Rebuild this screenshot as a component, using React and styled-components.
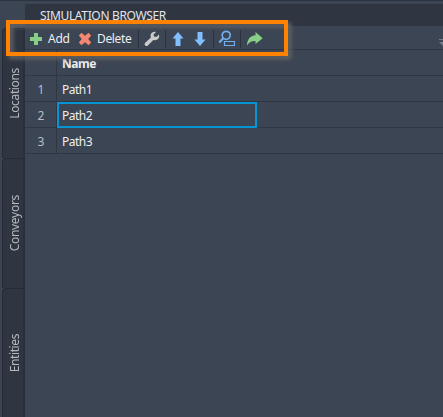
import React from "react";
import styled, { createGlobalStyle } from "styled-components";

const Global = createGlobalStyle`
  * { box-sizing: border-box; }
  html, body { margin: 0; height: 100%; background: #3c4553; overflow: hidden; }
  body { font-family: "Noto Sans", "Open Sans", sans-serif; font-size: 12px; color: #eceef0; }
`;

const Window = styled.div`
  position: relative;
  display: flex;
  width: 443px;
  height: 417px;
  border-top: 1px solid #2d333f;
  background: #3c4553;
`;

const SideTabs = styled.nav`
  width: 25px;
  padding: 27px 0 0 2px;
  display: flex;
  flex-direction: column;
`;

const SideTab = styled.div`
  height: 130px;
  flex: none;
  display: flex;
  align-items: center;
  justify-content: center;
  padding-left: 2px;
  background: #2f3541;
  border: 1px solid #262b36;
  border-width: 1px 0 0 1px;
  border-radius: 4px 0 0 0;
  box-shadow: inset -2px 0 #2a303b;
`;

const SideLabel = styled.span`
  writing-mode: vertical-rl;
  transform: rotate(180deg);
  line-height: 16px;
  letter-spacing: ${(p) => p.$spacing};
  color: #b4b8be;
`;

const Panel = styled.main`
  flex: 1;
  min-width: 0;
  padding-top: 3px;
`;

const Title = styled.header`
  height: 22px;
  padding: 0 15px;
  line-height: 23px;
  background: #2f3541;
  border-radius: 2px 0 0 0;
  color: #e4e6e9;
  white-space: nowrap;
  letter-spacing: -0.35px;
`;

const Toolbar = styled.div`
  display: flex;
  align-items: center;
  height: 23px;
  padding: 2px 0 0 4px;

  svg { flex: none; display: block; }
`;

const Action = styled.div`
  display: flex;
  align-items: center;
  gap: 5px;
  width: ${(p) => p.$width}px;
  letter-spacing: ${(p) => p.$spacing};
  line-height: 17px;
  white-space: nowrap;
`;

const Separator = styled.i`
  flex: none;
  width: 1px;
  height: 18px;
  margin: 0 ${(p) => p.$after}px 0 ${(p) => p.$before}px;
  background: #2b323d;
`;

const ArrowPair = styled.div`
  display: flex;
  gap: 10px;
`;

const OverflowMark = styled.span`
  margin: 7px 0 0 auto;
  width: 4px;
  overflow: hidden;
`;

const Table = styled.div`
  border-top: 1px solid #303744;
`;

const Row = styled.div`
  display: grid;
  grid-template-columns: 32px 1fr;
  height: 26px;
  line-height: 27px;
  border-bottom: 1px solid #303744;
`;

const Index = styled.span`
  height: 25px;
  padding-left: 1px;
  text-align: center;
  color: #b9bdc3;
  border-right: 1px solid #303744;
`;

const Cell = styled.span`
  position: relative;
  height: 25px;
  padding-left: 5px;
  letter-spacing: -0.5px;
  font-weight: ${(p) => (p.$head ? 700 : 400)};
`;

const Selection = styled.i`
  position: absolute;
  left: 0;
  top: 0;
  width: 200px;
  height: 26px;
  border: 2px solid #0893d2;
`;

const Highlight = styled.div`
  position: absolute;
  left: 6px;
  top: 19px;
  width: 282px;
  height: 36px;
  border: 4px solid #ff8200;
  filter: drop-shadow(3px 3px 2px #686868);
`;

const Plus = () => (
  <svg width="14" height="14" viewBox="0 0 14 14">
    <path d="M5 1h4v4h4v4H9v4H5V9H1V5h4z" fill="#87cf86" />
  </svg>
);

const Cross = () => (
  <svg width="14" height="14" viewBox="0 0 14 14">
    <path d="M.8 3.500 3.500.8 7 3.700 10.500.8 13.200 3.500 10.200 7 13.200 10.500 10.500 13.200 7 10.300 3.500 13.200.8 10.500 3.800 7z" fill="#f48670" />
  </svg>
);

const Wrench = () => (
  <svg width="16" height="16" viewBox="0 0 16 16">
    <path d="M14.900 3.600 12.400 6 10 5.600 9.600 3.400 12 1C9.900.3 7.400 1.300 6.700 3.400 6.400 4.500 6.500 5.500 6.900 6.500L1.200 11.800C.4 12.600.4 13.800 1.200 14.500 2 15.300 3.200 15.200 3.900 14.500L9.300 9C11.500 9.900 13.900 8.900 14.900 6.800 15.300 5.700 15.300 4.600 14.900 3.600z" fill="#c9cac9" />
  </svg>
);

const Arrow = ({ down }) => (
  <svg width="12" height="16" viewBox="0 0 12 16">
    <path d={down ? "M3.500 1h5v7.500h3L6 15 .5 8.500h3z" : "M6 1l5.500 6.500h-3V15h-5V7.500h-3z"} fill="#82bfff" />
  </svg>
);

const FindBox = () => (
  <svg width="17" height="17" viewBox="0 0 17 17" fill="none" stroke="#73adee">
    <circle cx="8.200" cy="5.300" r="4" strokeWidth="1.700" />
    <path d="M5.300 8.300 1.300 12.500" strokeWidth="2.200" />
    <path d="M6.500 11.500h10v4h-10z" strokeWidth="1.200" />
  </svg>
);

const Share = () => (
  <svg width="17" height="16" viewBox="0 0 17 16">
    <path d="M9.500 1 16.700 7.200 9.500 12.900V10C5.500 9.900 3 11.200 1 14.400 1 8.500 4.300 4.500 9.500 4.200z" fill="#87cf86" />
  </svg>
);

const OverflowIcon = () => (
  <svg width="8" height="7" viewBox="0 0 8 7" fill="#747b86">
    <path d="M0 0h8v1H0zM0 3h8L4 7z" />
  </svg>
);

const paths = ["Path1", "Path2", "Path3"];

export default function App() {
  return (
    <>
      <Global />
      <Window>
        <SideTabs>
          <SideTab><SideLabel $spacing="-0.35px">Locations</SideLabel></SideTab>
          <SideTab><SideLabel $spacing="-0.3px">Conveyors</SideLabel></SideTab>
          <SideTab><SideLabel $spacing="-0.4px">Entities</SideLabel></SideTab>
        </SideTabs>
        <Panel>
          <Title>SIMULATION BROWSER</Title>
          <Toolbar>
            <Action $width={49} $spacing="-0.25px"><Plus />Add</Action>
            <Action $width={55} $spacing="-0.35px"><Cross />Delete</Action>
            <Separator $before={5} $after={5} />
            <Wrench />
            <Separator $before={5} $after={6} />
            <ArrowPair>
              <Arrow />
              <Arrow down />
            </ArrowPair>
            <Separator $before={7} $after={4} />
            <FindBox />
            <Separator $before={5} $after={5} />
            <Share />
            <OverflowMark><OverflowIcon /></OverflowMark>
          </Toolbar>
          <Table>
            <Row><Index /><Cell $head>Name</Cell></Row>
            {paths.map((name, i) => (
              <Row key={name}>
                <Index>{i + 1}</Index>
                <Cell>{name}{i === 1 && <Selection />}</Cell>
              </Row>
            ))}
          </Table>
        </Panel>
        <Highlight />
      </Window>
    </>
  );
}
